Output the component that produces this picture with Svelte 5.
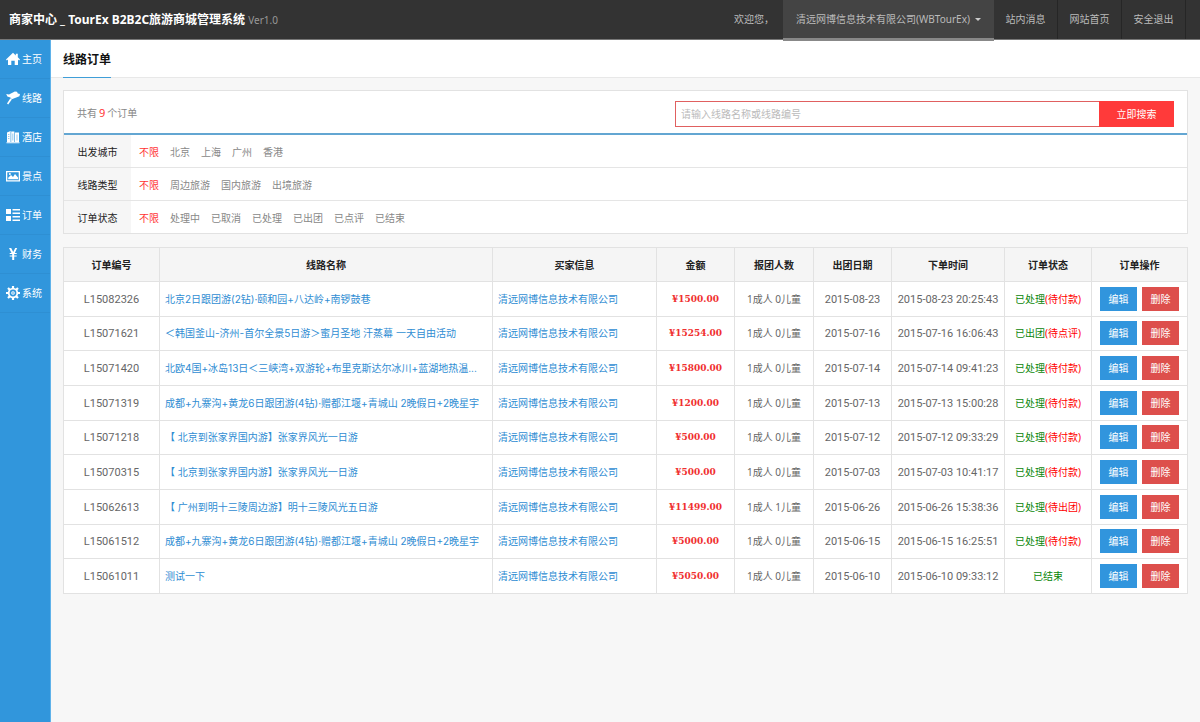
<script>
  const nav = [
    { icon: 'home', label: '主页' },
    { icon: 'sign', label: '线路' },
    { icon: 'hotel', label: '酒店' },
    { icon: 'picture', label: '景点' },
    { icon: 'list', label: '订单' },
    { icon: 'yen', label: '财务' },
    { icon: 'gear', label: '系统' }
  ];

  const filters = [
    { label: '出发城市', options: ['不限', '北京', '上海', '广州', '香港'] },
    { label: '线路类型', options: ['不限', '周边旅游', '国内旅游', '出境旅游'] },
    { label: '订单状态', options: ['不限', '处理中', '已取消', '已处理', '已出团', '已点评', '已结束'] }
  ];

  const columns = ['订单编号', '线路名称', '买家信息', '金额', '报团人数', '出团日期', '下单时间', '订单状态', '订单操作'];
  const buyer = '清远网博信息技术有限公司';

  const orders = [
    { id: 'L15082326', name: '北京2日跟团游(2钻)·颐和园+八达岭+南锣鼓巷', price: '1500.00', people: '1成人 0儿童', date: '2015-08-23', time: '2015-08-23 20:25:43', status: '已处理', note: '(待付款)' },
    { id: 'L15071621', name: '＜韩国釜山-济州-首尔全景5日游＞蜜月圣地 汗蒸幕 一天自由活动', price: '15254.00', people: '1成人 0儿童', date: '2015-07-16', time: '2015-07-16 16:06:43', status: '已出团', note: '(待点评)' },
    { id: 'L15071420', name: '北欧4国+冰岛13日＜三峡湾+双游轮+布里克斯达尔冰川+蓝湖地热温...', price: '15800.00', people: '1成人 0儿童', date: '2015-07-14', time: '2015-07-14 09:41:23', status: '已处理', note: '(待付款)' },
    { id: 'L15071319', name: '成都+九寨沟+黄龙6日跟团游(4钻)·赠都江堰+青城山 2晚假日+2晚星宇', price: '1200.00', people: '1成人 0儿童', date: '2015-07-13', time: '2015-07-13 15:00:28', status: '已处理', note: '(待付款)' },
    { id: 'L15071218', name: '【 北京到张家界国内游】张家界风光一日游', price: '500.00', people: '1成人 0儿童', date: '2015-07-12', time: '2015-07-12 09:33:29', status: '已处理', note: '(待付款)' },
    { id: 'L15070315', name: '【 北京到张家界国内游】张家界风光一日游', price: '500.00', people: '1成人 0儿童', date: '2015-07-03', time: '2015-07-03 10:41:17', status: '已处理', note: '(待付款)' },
    { id: 'L15062613', name: '【 广州到明十三陵周边游】明十三陵风光五日游', price: '11499.00', people: '1成人 1儿童', date: '2015-06-26', time: '2015-06-26 15:38:36', status: '已处理', note: '(待出团)' },
    { id: 'L15061512', name: '成都+九寨沟+黄龙6日跟团游(4钻)·赠都江堰+青城山 2晚假日+2晚星宇', price: '5000.00', people: '1成人 0儿童', date: '2015-06-15', time: '2015-06-15 16:25:51', status: '已处理', note: '(待付款)' },
    { id: 'L15061011', name: '测试一下', price: '5050.00', people: '1成人 0儿童', date: '2015-06-10', time: '2015-06-10 09:33:12', status: '已结束', note: '' }
  ];

  let selected = $state(['不限', '不限', '不限']);
  let keyword = $state('');
</script>

<div class="page">
  <header class="topbar">
    <h1>商家中心 _ TourEx B2B2C旅游商城管理系统 <small>Ver1.0</small></h1>
    <div class="user">
      <span class="welcome">欢迎您，</span>
      <button class="account" type="button">清远网博信息技术有限公司(WBTourEx)<i class="caret"></i></button>
      <a href="#messages">站内消息</a>
      <a href="#site">网站首页</a>
      <a href="#logout">安全退出</a>
    </div>
  </header>

  <div class="body">
    <nav class="sidebar">
      {#each nav as item}
        <a href={'#' + item.icon}>
          <svg viewBox="0 0 14 14" aria-hidden="true">
            {#if item.icon === 'home'}
              <path d="M7 .8 9.8 3.4V1.8h2v3.5L14 7.4l-.9 1L12 7.5V13H8.7V8.8H5.3V13H2V7.5l-1.1.9-.9-1z" />
            {:else if item.icon === 'sign'}
              <path d="M.2 3 3 3.6 8.8.6 11 .8l.8 1.6L14 3l-.6 2.2-7.6 3L4.4 6.6 1.4 5.4z" />
              <path d="m4.4 7.2 1.4 1.2L2.2 13.4l-1.2-.8z" />
            {:else if item.icon === 'hotel'}
              <path d="M1 2.4 4.6 1v11H1zM5.2 1.6h3.2V12H5.2zM9 2.4h4V12H9zM.5 12.3h13v1H.5z" />
              <path class="cut" d="M2 4.5h1.4M2 6.5h1.4M2 8.5h1.4M6.8 3.5v7M11 4.5v6" />
            {:else if item.icon === 'picture'}
              <path fill-rule="evenodd" d="M0 2h14v10.5H0zm1.3 1.3v7.9h11.4V3.3z" />
              <path d="M2.2 10.2V8.7L5 6l2 2 2-3 3 3.4v1.8z" />
              <circle cx="3.9" cy="5" r="1" />
            {:else if item.icon === 'list'}
              <path d="M0 1h5v5H0zM0 8h5v5H0zM6.5 1H14v1.6H6.5zM6.5 4.4H14V6H6.5zM6.5 8H14v1.6H6.5zM6.5 11.4H14V13H6.5z" />
            {:else if item.icon === 'yen'}
              <path d="M3 1h2.2l2 4 2-4h2L8.8 5.9h1.9v1.2H8.2v1.3h2.5v1.2H8.2V13h-2V9.6H3.7V8.4h2.5V7.1H3.7V5.9h1.8z" />
            {:else}
              <path class="teeth" d="M7 0v14M0 7h14M2 2l10 10M12 2 2 12" />
              <circle cx="7" cy="7" r="5.2" />
              <circle class="hole" cx="7" cy="7" r="3.4" />
              <circle cx="7" cy="7" r="1.8" />
              <circle class="hole" cx="7" cy="7" r=".8" />
            {/if}
          </svg>
          <span>{item.label}</span>
        </a>
      {/each}
    </nav>

    <main>
      <div class="titlebar"><h2>线路订单</h2></div>

      <div class="content">
        <section class="panel">
          <div class="summary">
            <p>共有<b>9</b>个订单</p>
            <form class="search" onsubmit={(e) => e.preventDefault()}>
              <input type="text" aria-label="搜索" placeholder="请输入线路名称或线路编号" bind:value={keyword} />
              <button type="submit">立即搜索</button>
            </form>
          </div>
          {#each filters as filter, i}
            <div class="filter">
              <div class="filter-label">{filter.label}</div>
              <div class="options">
                {#each filter.options as option}
                  <button type="button" class:active={selected[i] === option} onclick={() => (selected[i] = option)}>{option}</button>
                {/each}
              </div>
            </div>
          {/each}
        </section>

        <table>
          <colgroup>
            <col class="c-id" /><col /><col class="c-buyer" /><col class="c-day" /><col class="c-people" />
            <col class="c-day" /><col class="c-time" /><col class="c-status" /><col class="c-id" />
          </colgroup>
          <thead>
            <tr>
              {#each columns as column}<th scope="col">{column}</th>{/each}
            </tr>
          </thead>
          <tbody>
            {#each orders as order}
              <tr>
                <td class="num">{order.id}</td>
                <td class="text name"><a href={'#' + order.id}>{order.name}</a></td>
                <td class="text"><a href="#buyer">{buyer}</a></td>
                <td class="price">¥{order.price}</td>
                <td>{order.people}</td>
                <td class="num">{order.date}</td>
                <td class="num">{order.time}</td>
                <td><span class="done">{order.status}</span><span class="wait">{order.note}</span></td>
                <td>
                  <div class="actions">
                    <button type="button" class="edit">编辑</button>
                    <button type="button" class="delete">删除</button>
                  </div>
                </td>
              </tr>
            {/each}
          </tbody>
        </table>
      </div>
    </main>
  </div>
</div>

<style>
  :global(body) {
    margin: 0;
    background: #f7f7f7;
  }
  .page {
    display: flex;
    flex-direction: column;
    min-height: 100vh;
    color: #666;
    font: 10px/16px "Noto Sans", "Noto Sans CJK SC", sans-serif;
  }
  button,
  input {
    margin: 0;
    padding: 0;
    border: 0;
    border-radius: 0;
    background: none;
    color: inherit;
    font: inherit;
  }
  button {
    cursor: pointer;
  }
  a {
    color: inherit;
    text-decoration: none;
  }
  h1,
  h2,
  p {
    margin: 0;
  }

  .topbar {
    display: flex;
    justify-content: space-between;
    height: 39px;
    padding: 0 14px 0 9px;
    border-bottom: 1px solid #777;
    background: #333;
  }
  h1 {
    color: #fff;
    font-size: 12px;
    line-height: 39px;
    white-space: nowrap;
  }
  h1 small {
    color: #999;
    font-size: 10px;
    font-weight: 400;
  }
  .user {
    display: flex;
    color: #bbb;
    line-height: 39px;
    white-space: nowrap;
  }
  .welcome {
    padding-right: 9px;
  }
  .account {
    display: flex;
    align-items: center;
    justify-content: center;
    gap: 5px;
    position: relative;
    width: 211px;
    height: 41px;
    border-bottom: 3px solid #888;
    background: #444;
  }
  .caret {
    border: 3px solid transparent;
    border-top: 3px solid #ccc;
    border-bottom: 0;
  }
  .user a {
    width: 63px;
    border-right: 1px solid #262626;
    text-align: center;
  }

  .body {
    display: flex;
    flex: 1;
  }
  .sidebar {
    flex: none;
    width: 50px;
    border-right: 1px solid #5fb2ea;
    background: #3196dc;
    color: #fff;
  }
  .sidebar a {
    display: flex;
    align-items: center;
    gap: 2px;
    height: 38px;
    padding-left: 6px;
    border-bottom: 1px solid #2e8fd3;
  }
  .sidebar svg {
    width: 14px;
    height: 14px;
    fill: #fff;
  }
  .sidebar .cut {
    stroke: #3196dc;
    stroke-width: 0.5;
  }
  .sidebar .teeth {
    stroke: #fff;
    stroke-width: 2.2;
  }
  .sidebar .hole {
    fill: #3196dc;
  }

  main {
    flex: 1;
    min-width: 0;
  }
  .titlebar {
    padding: 0 12px;
    background: linear-gradient(#e8e8e8, #e8e8e8) bottom / 100% 1px no-repeat #fff;
  }
  h2 {
    width: max-content;
    height: 37px;
    border-bottom: 1px solid #3f9ed8;
    color: #111;
    font-size: 12px;
    line-height: 40px;
  }
  .content {
    padding: 12px;
  }
  .panel {
    border: 1px solid #e2e2e2;
    background: #fff;
  }
  .summary {
    display: flex;
    align-items: center;
    justify-content: space-between;
    height: 42px;
    padding: 0 13px;
    border-bottom: 2px solid #63a6d2;
    color: #888;
  }
  .summary p {
    margin-top: 2px;
  }
  .summary b {
    margin: 0 2px;
    color: #f33;
    font-size: 11px;
    font-weight: 400;
  }
  .search {
    display: flex;
    flex: 0 1 499px;
    height: 26px;
    margin-top: 4px;
  }
  .search input {
    flex: 1;
    min-width: 0;
    padding: 0 5px;
    border: 1px solid #e06060;
    border-right: 0;
    background: #fff;
  }
  .search input::placeholder {
    color: #bbb;
    opacity: 1;
  }
  .search button {
    width: 75px;
    background: #ff3a3a;
    color: #fff;
  }
  .filter {
    display: flex;
    height: 32px;
    line-height: 34px;
  }
  .filter + .filter {
    border-top: 1px solid #e5e5e5;
  }
  .filter-label {
    width: 67px;
    background: #f6f6f6;
    color: #222;
    text-align: center;
  }
  .options {
    display: flex;
    gap: 11px;
    padding-left: 8px;
    color: #888;
  }
  .options .active {
    color: #f33;
  }

  table {
    width: 100%;
    height: 347px;
    margin-top: 13px;
    border-collapse: collapse;
    table-layout: fixed;
    background: #fff;
  }
  .c-id {
    width: 96px;
  }
  .c-buyer {
    width: 164px;
  }
  .c-day {
    width: 78px;
  }
  .c-people {
    width: 79px;
  }
  .c-time {
    width: 113px;
  }
  .c-status {
    width: 87px;
  }
  th,
  td {
    padding: 0;
    border: 1px solid #e2e2e2;
    text-align: center;
    white-space: nowrap;
  }
  thead tr {
    height: 34px;
  }
  th {
    background: #f5f5f5;
    color: #222;
  }
  .num {
    padding-top: 2px;
    font-family: Roboto, sans-serif;
    font-size: 11px;
  }
  .text {
    padding: 0 5px;
    color: #2f8dd3;
    text-align: left;
  }
  .name {
    overflow: hidden;
    font-family: Inter, "Noto Sans CJK SC", sans-serif;
    text-overflow: ellipsis;
  }
  .price {
    color: #f03030;
    font-family: Georgia, "DejaVu Serif", serif;
    font-size: 9px;
    font-weight: 700;
  }
  .done {
    color: #0a860a;
  }
  .wait {
    color: #f00;
  }
  .actions {
    display: flex;
    justify-content: center;
    gap: 5px;
  }
  .actions button {
    width: 37px;
    height: 24px;
    color: #fff;
  }
  .edit {
    background: #3195dd;
  }
  .delete {
    background: #dd4f4c;
  }
</style>
